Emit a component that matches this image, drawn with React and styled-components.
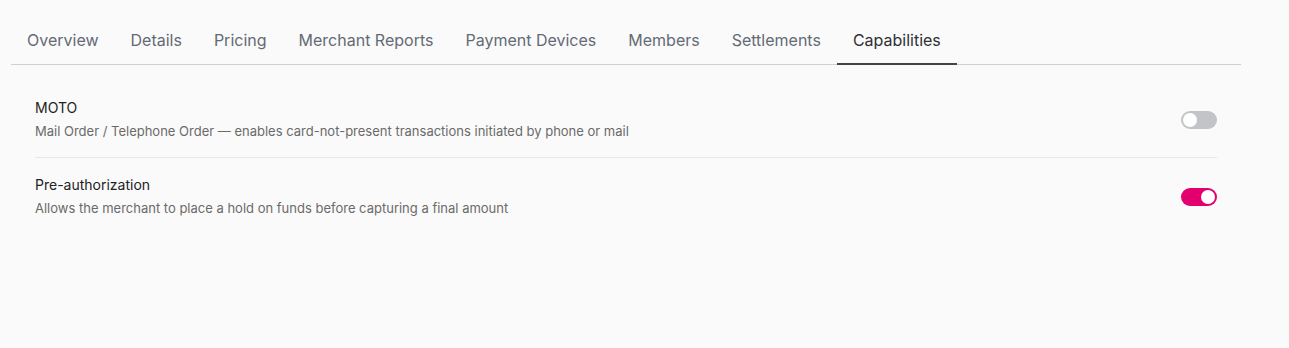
import React, { useState } from "react";
import styled, { createGlobalStyle } from "styled-components";

const GlobalStyle = createGlobalStyle`
  html, body {
    margin: 0;
    padding: 0;
    background: #fafafa;
    font-family: Inter, "Noto Sans", sans-serif;
  }
`;

const Page = styled.div`
  width: 1230px;
  padding: 16px 0 0 11px;
`;

const TabBar = styled.div`
  display: flex;
  border-bottom: 1px solid #cfcfcf;
`;

const Tab = styled.button`
  background: none;
  border: none;
  font-family: inherit;
  font-size: 16px;
  line-height: 24px;
  padding: 12px 16px 11px;
  margin-bottom: -1px;
  color: ${(props) => (props.active ? "#2f3033" : "#646a75")};
  border-bottom: 2px solid ${(props) => (props.active ? "#444" : "transparent")};
  cursor: pointer;
`;

const Content = styled.div`
  padding: 16px 24px;
`;

const Row = styled.div`
  display: flex;
  align-items: center;
  justify-content: space-between;
  padding: 17px 0 16px;
  border-bottom: ${(props) => (props.last ? "none" : "1px solid #e8e8e8")};
`;

const Info = styled.div`
  display: flex;
  flex-direction: column;
  gap: 3px;
`;

const Title = styled.div`
  font-size: 14px;
  line-height: 20px;
  color: #222;
`;

const Desc = styled.div`
  font-size: 13px;
  line-height: 20px;
  color: #6a6a6a;
`;

const Track = styled.button`
  position: relative;
  width: 36px;
  height: 18px;
  padding: 0;
  border: none;
  border-radius: 9px;
  background: ${(props) => (props.on ? "#e2006f" : "#c3c4c7")};
  cursor: pointer;
  flex-shrink: 0;
`;

const Knob = styled.span`
  position: absolute;
  top: 2px;
  left: ${(props) => (props.on ? "20px" : "2px")};
  width: 14px;
  height: 14px;
  border-radius: 50%;
  background: #fff;
  transition: left 0.2s ease;
`;

const tabs = [
  "Overview",
  "Details",
  "Pricing",
  "Merchant Reports",
  "Payment Devices",
  "Members",
  "Settlements",
  "Capabilities",
];

const capabilities = [
  {
    id: "moto",
    title: "MOTO",
    desc: "Mail Order / Telephone Order — enables card-not-present transactions initiated by phone or mail",
    on: false,
  },
  {
    id: "preauth",
    title: "Pre-authorization",
    desc: "Allows the merchant to place a hold on funds before capturing a final amount",
    on: true,
  },
];

export default function App() {
  const [active, setActive] = useState("Capabilities");
  const [state, setState] = useState(
    Object.fromEntries(capabilities.map((c) => [c.id, c.on]))
  );

  return (
    <Page>
      <GlobalStyle />
      <TabBar>
        {tabs.map((t) => (
          <Tab key={t} active={t === active} onClick={() => setActive(t)}>
            {t}
          </Tab>
        ))}
      </TabBar>
      <Content>
        {capabilities.map((c, i) => (
          <Row key={c.id} last={i === capabilities.length - 1}>
            <Info>
              <Title>{c.title}</Title>
              <Desc>{c.desc}</Desc>
            </Info>
            <Track
              on={state[c.id]}
              onClick={() => setState({ ...state, [c.id]: !state[c.id] })}
            >
              <Knob on={state[c.id]} />
            </Track>
          </Row>
        ))}
      </Content>
    </Page>
  );
}
